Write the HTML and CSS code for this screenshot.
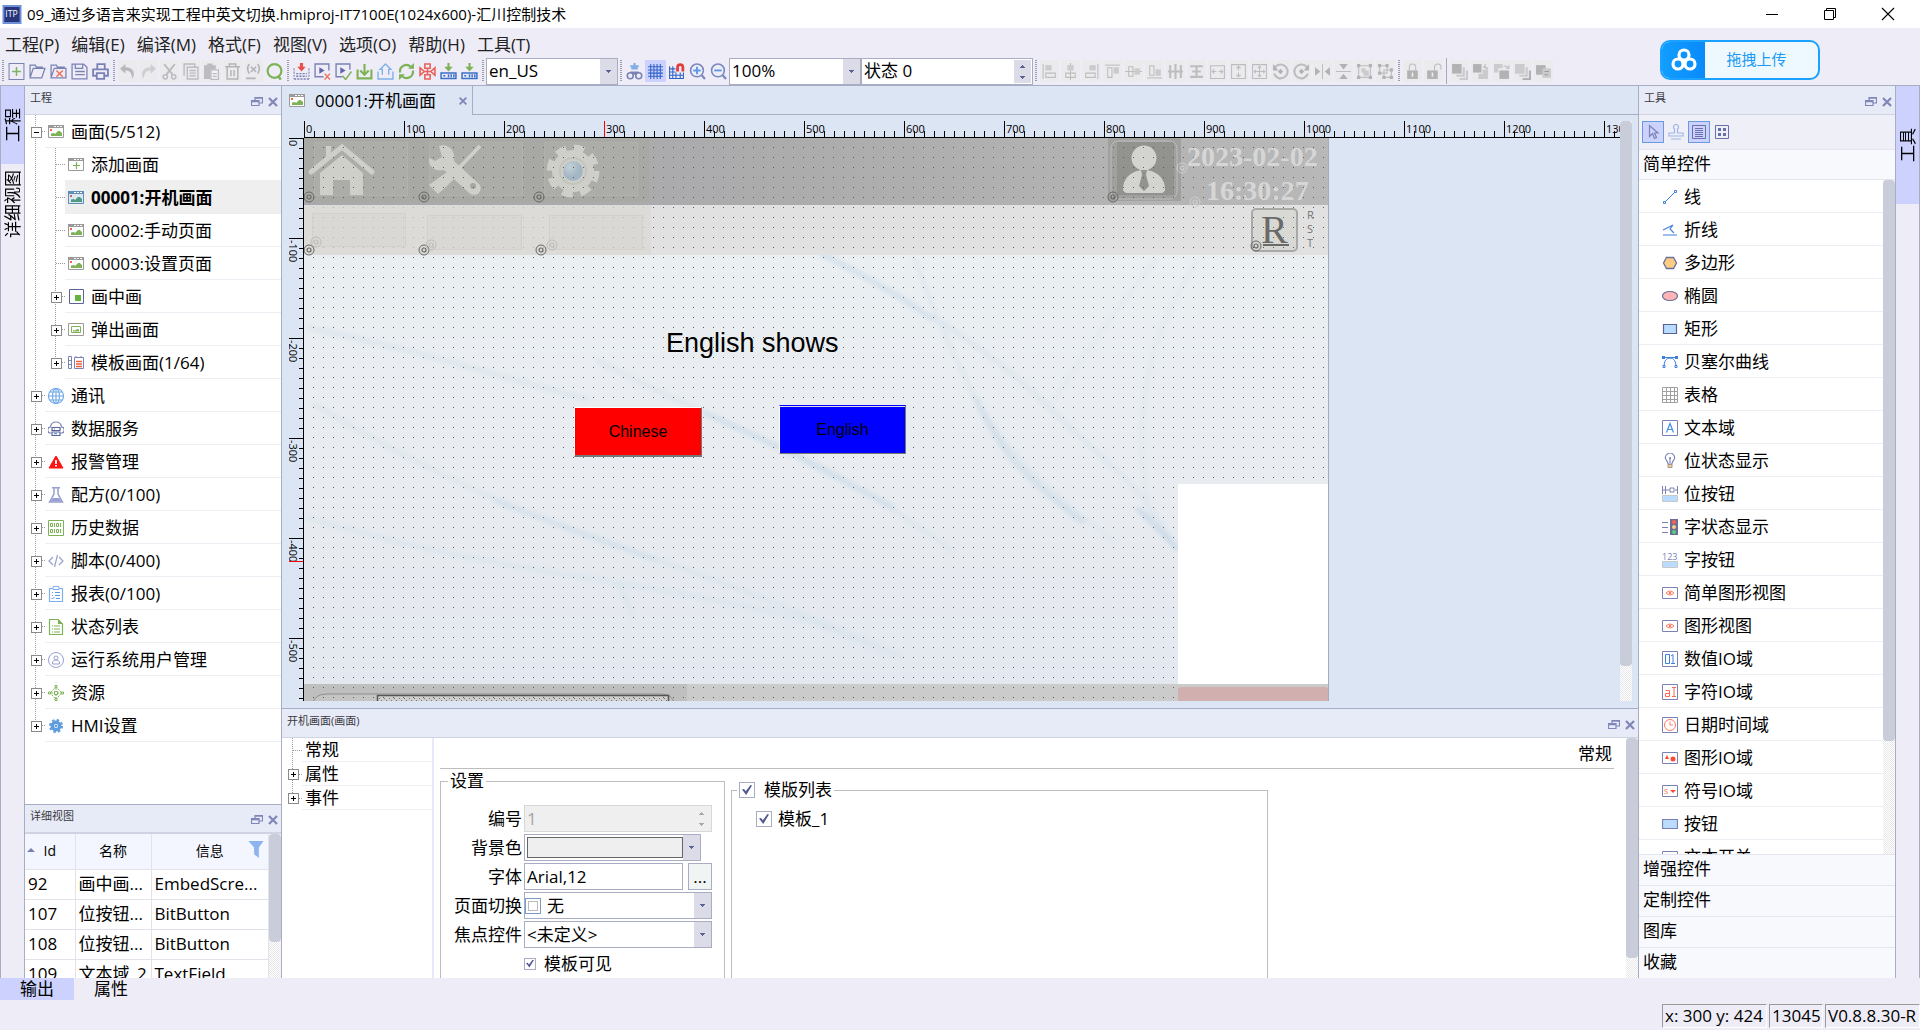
FILE: index.html
```html
<!DOCTYPE html>
<html lang="zh-CN">
<head>
<meta charset="utf-8">
<title>09_通过多语言来实现工程中英文切换.hmiproj-IT7100E(1024x600)-汇川控制技术</title>
<link rel="stylesheet" href="styles.css">
</head>
<body>
<svg class="defs" aria-hidden="true">
  <defs>
    <!-- toolbar: file -->
    <symbol id="i-new" viewBox="0 0 16 16"><path d="M1 .5h14v15H1zM8 4v8M4 8h8" fill="none" stroke="#7a82b4"/><path d="M8 4v8M4 8h8" stroke="#7fb35f" stroke-width="1.4"/></symbol>
    <symbol id="i-open" viewBox="0 0 16 16"><path d="M1 13V2h5l1 2h6M4 5h11l-3 9H1z" fill="none" stroke="#7a82b4" stroke-width="1.2"/></symbol>
    <symbol id="i-closep" viewBox="0 0 16 16"><path d="M1 13V2h5l1 2h7M4 5h11v9H1z" fill="none" stroke="#7a82b4" stroke-width="1.2"/><path d="M6 7l6 6M12 7l-6 6" stroke="#f0705a" stroke-width="1.4"/></symbol>
    <symbol id="i-save" viewBox="0 0 16 16"><path d="M1 1h11l3 3v11H1zM4 1v4h7V1M4 8h9M4 11h9" fill="none" stroke="#7a82b4" stroke-width="1.2"/></symbol>
    <symbol id="i-print" viewBox="0 0 16 16"><path d="M5 6V1h7v5M4 12H1V6h14v6h-3M4.500 9.500h7V15h-7z" fill="none" stroke="#7a82b4" stroke-width="1.7"/></symbol>
    <!-- toolbar: edit -->
    <symbol id="i-undo" viewBox="0 0 16 16"><path d="M6 1L1 5.500 6 10V7c4 0 6 2 6.500 8C16 9 13 4 6 4z" fill="#b8b8bc"/></symbol>
    <symbol id="i-redo" viewBox="0 0 16 16"><path d="M10 1l5 4.500L10 10V7c-4 0-6 2-6.500 8C0 9 3 4 10 4z" fill="#cfcfd2"/></symbol>
    <symbol id="i-cut" viewBox="0 0 16 16"><path d="M3 1l8 10M13 1L5 11" stroke="#bcbcc0" stroke-width="1.8"/><circle cx="4" cy="13" r="2" fill="none" stroke="#bcbcc0" stroke-width="1.400"/><circle cx="12" cy="13" r="2" fill="none" stroke="#bcbcc0" stroke-width="1.400"/></symbol>
    <symbol id="i-copy" viewBox="0 0 16 16"><path d="M5 4h10v11H5zM2 12V1h10v3M7 7h6M7 9.500h6M7 12h6" fill="none" stroke="#bcbcc0" stroke-width="1.300"/></symbol>
    <symbol id="i-paste" viewBox="0 0 16 16"><path d="M1 2h3V.5h5V2h3v4H7v9H1z" fill="#bcbcc0"/><path d="M7.500 6.500h7v9h-7zM9 10h4M9 12.500h4" fill="#f3f3f5" stroke="#bcbcc0" stroke-width="1.200"/></symbol>
    <symbol id="i-trash" viewBox="0 0 16 16"><path d="M1 3.500h14M5 3V1h6v2M3 4v11h10V4M6.500 6.500v6M9.500 6.500v6" fill="none" stroke="#b4b4b8" stroke-width="1.400"/></symbol>
    <symbol id="i-var" viewBox="0 0 16 16"><path d="M4 1Q1 5 4 10M12 1q3 4 0 9M5.500 3.500l5 5M10.500 3.500l-5 5M1 14.500h9" fill="none" stroke="#b4b4b8" stroke-width="1.500"/></symbol>
    <symbol id="i-search" viewBox="0 0 16 16"><circle cx="8" cy="7.500" r="6.500" fill="none" stroke="#7db356" stroke-width="2"/><path d="M11 12l3 3.500" stroke="#7db356" stroke-width="2.400"/></symbol>
    <!-- toolbar: build -->
    <symbol id="i-build" viewBox="0 0 16 16"><path d="M8 0v4" stroke="#e8504a" stroke-width="3"/><path d="M4 3.500h8L8 8z" fill="#e8504a"/><path d="M1 5v10M15 5v10" stroke="#7a82b4" stroke-dasharray="2 1"/><path d="M3 10h10M3 12.500h10M1 15h14" stroke="#7a82b4" stroke-width="1.300" stroke-dasharray="2 1"/></symbol>
    <symbol id="i-simx" viewBox="0 0 16 16"><path d="M9 13H1V1h13v6" fill="none" stroke="#7a82b4" stroke-width="1.300"/><path d="M5 4v6l5-3z" fill="#5d67a8"/><path d="M10 10l5 5.500M15 10l-5 5.500" stroke="#f0705a" stroke-width="1.300"/></symbol>
    <symbol id="i-simok" viewBox="0 0 16 16"><path d="M7 13H1V1h13v5" fill="none" stroke="#7a82b4" stroke-width="1.300"/><path d="M5 4v6l5-3z" fill="#5d67a8"/><path d="M7 12l3 3.500L15.500 8" fill="none" stroke="#7db356" stroke-width="1.400"/></symbol>
    <symbol id="i-down" viewBox="0 0 16 16"><path d="M8 1v9M4 7l4 4 4-4M1.500 6v8.500h13V6" fill="none" stroke="#7db356" stroke-width="2"/></symbol>
    <symbol id="i-up" viewBox="0 0 16 16"><path d="M5 11V6H3l5-5 5 5h-2v5M1 8v7h14V8" fill="none" stroke="#7fb0ea" stroke-width="1.300"/></symbol>
    <symbol id="i-sync" viewBox="0 0 16 16"><path d="M2 9a6 6 0 0 1 10-5.500M14 7a6 6 0 0 1-10 5.500" fill="none" stroke="#7db356" stroke-width="2"/><path d="M9.500 5.500H15V0zM6.500 10.500H1V16z" fill="#7db356"/></symbol>
    <symbol id="i-net" viewBox="0 0 16 16"><path d="M5.500 1h5v4h-5zM5.500 11h5v4h-5zM8 5v6M1 4.500v7l4-3.500zM15 4.500v7L11 8zM5 8h6" fill="none" stroke="#e8645c" stroke-width="1.500"/></symbol>
    <symbol id="i-dev" viewBox="0 0 16 16"><path d="M8 0v4" stroke="#7db356" stroke-width="2"/><path d="M4 3.500h8L8 8z" fill="#7db356"/><path d="M1 9.500h14v5H1zM3 12h2M8 10.500v3M10.500 10.500v3M13 10.500v3" fill="none" stroke="#3b6fc8" stroke-width="1.400"/></symbol>
    <!-- toolbar: view -->
    <symbol id="i-bino" viewBox="0 0 16 16"><path d="M8 0v6M4 3h8M5 5h6" stroke="#82aee6" stroke-width="2"/><path d="M4 8h8v3H4z" fill="#7a82b4"/><circle cx="4" cy="12" r="2.800" fill="#eeedf7" stroke="#7a82b4" stroke-width="1.500"/><circle cx="12" cy="12" r="2.800" fill="#eeedf7" stroke="#7a82b4" stroke-width="1.500"/></symbol>
    <symbol id="i-grid" viewBox="0 0 16 16"><path d="M3.500 1v14M6.500 1v14M9.500 1v14M12.500 1v14M1 3.500h14M1 6.500h14M1 9.500h14M1 12.500h14" stroke="#2f62c8"/></symbol>
    <symbol id="i-magnet" viewBox="0 0 16 16"><path d="M1.500 3v12M4.500 3v12M7.500 9v6M11.500 9v6M14.500 9v6M1 5.500h6M1 8.500h6M1 11.500h14M1 14.500h14" stroke="#2f62c8"/><path d="M9 8V4a2.500 2.500 0 0 1 5 0v4" fill="none" stroke="#e23d3d" stroke-width="2.600"/></symbol>
    <symbol id="i-zin" viewBox="0 0 16 16"><circle cx="7.500" cy="7" r="6" fill="none" stroke="#7a86be" stroke-width="1.500"/><path d="M4 7h7M7.500 3.500v7" stroke="#5b9ae8" stroke-width="1.800"/><path d="M12 11.500l3 3.500" stroke="#7a86be" stroke-width="2"/></symbol>
    <symbol id="i-zout" viewBox="0 0 16 16"><circle cx="7.500" cy="7" r="6" fill="none" stroke="#7a86be" stroke-width="1.500"/><path d="M4 7h7" stroke="#5b9ae8" stroke-width="1.800"/><path d="M12 11.500l3 3.500" stroke="#7a86be" stroke-width="2"/></symbol>
    <!-- toolbar: align -->
    <symbol id="a-l" viewBox="0 0 16 16"><path d="M2 1v14" class="g"/><path d="M4 2h6v5H4z" class="gf"/><path d="M4.500 9.500h9v4h-9z" class="g"/></symbol>
    <symbol id="a-c" viewBox="0 0 16 16"><path d="M8 0v16" class="g"/><path d="M5 2h6v5H5z" class="gf"/><path d="M3.500 9.500h9v4h-9z" class="g"/></symbol>
    <symbol id="a-r" viewBox="0 0 16 16"><path d="M14 1v14" class="g"/><path d="M6 2h6v5H6z" class="gf"/><path d="M2.500 9.500h9v4h-9z" class="g"/></symbol>
    <symbol id="a-t" viewBox="0 0 16 16"><path d="M1 2h14" class="g"/><path d="M9 4h5v6H9z" class="gf"/><path d="M3.500 4.500h4v9h-4z" class="g"/></symbol>
    <symbol id="a-m" viewBox="0 0 16 16"><path d="M0 8h16" class="g"/><path d="M9 5h5v6H9z" class="gf"/><path d="M3.500 3.500h4v9h-4z" class="g"/></symbol>
    <symbol id="a-b" viewBox="0 0 16 16"><path d="M1 14h14" class="g"/><path d="M9 6h5v6H9z" class="gf"/><path d="M3.500 2.500h4v9h-4z" class="g"/></symbol>
    <symbol id="a-h" viewBox="0 0 16 16"><path d="M3 2v12M8 1v14M13 2v12M1 8h14" class="g2"/></symbol>
    <symbol id="a-v" viewBox="0 0 16 16"><path d="M2 3h12M4 8h8M2 13h12M8 3v10" class="g2"/></symbol>
    <symbol id="a-w" viewBox="0 0 16 16"><path d="M1.500 2.500h13v12h-13zM3 8h4M9 8h4M5 6L3 8l2 2M11 6l2 2-2 2" class="g"/></symbol>
    <symbol id="a-hh" viewBox="0 0 16 16"><path d="M1.500 1.500h13v13h-13zM8 3v4M8 9v4M6 5l2-2 2 2M6 11l2 2 2-2" class="g"/></symbol>
    <symbol id="a-wh" viewBox="0 0 16 16"><path d="M1.500 1.500h13v13h-13zM8 3v10M3 8h10M6.500 4.500L8 3l1.500 1.500M6.500 11.500L8 13l1.500-1.500M4.500 6.500L3 8l1.500 1.500M11.500 6.500L13 8l-1.500 1.500" class="g"/></symbol>
    <symbol id="a-rl" viewBox="0 0 16 16"><path d="M3 4a6.500 6.500 0 1 1-1 6" class="g2"/><path d="M1 1v6h5z" class="gd"/><path d="M8 5.500L10.500 8 8 10.500 5.500 8z" class="gd"/></symbol>
    <symbol id="a-rr" viewBox="0 0 16 16"><path d="M13 4a6.500 6.500 0 1 0 1 6" class="g2"/><path d="M15 1v6h-5z" class="gd"/><path d="M8 5.500L10.500 8 8 10.500 5.500 8z" class="gd"/></symbol>
    <symbol id="a-fh" viewBox="0 0 16 16"><path d="M8 1v14" class="g"/><path d="M1 4l5 4-5 4zM15 4l-5 4 5 4z" class="gd"/></symbol>
    <symbol id="a-fv" viewBox="0 0 16 16"><path d="M1 8h14" class="g"/><path d="M4 1l4 5 4-5zM4 15l4-5 4 5z" class="gd"/></symbol>
    <symbol id="a-g" viewBox="0 0 16 16"><path d="M2.500 2.500h11v11h-11z" class="g"/><path d="M5 5h4v4H5zM7 7h5v5H7z" class="gf"/><path d="M1 1h3v3H1zM12 1h3v3h-3zM1 12h3v3H1zM12 12h3v3h-3z" class="gd"/></symbol>
    <symbol id="a-u" viewBox="0 0 16 16"><path d="M2.500 2.500h7v7h-7zM6.500 6.500h7v7h-7z" class="g"/><path d="M1 1h3v3H1zM8 1h3v3H8zM1 8h3v3H1zM12 5h3v3h-3zM12 12h3v3h-3zM5 12h3v3H5z" class="gd"/></symbol>
    <symbol id="a-lock" viewBox="0 0 16 16"><path d="M5 7V4a3 3 0 0 1 6 0v3" class="g"/><path d="M3 7h10v8H3z" class="gd"/><path d="M8 9v4" stroke="#eee" stroke-width="1.500"/></symbol>
    <symbol id="a-unlock" viewBox="0 0 16 16"><path d="M9 7V4a3 3 0 0 1 6 0v2" class="g"/><path d="M2 7h10v8H2z" class="gd"/><path d="M7 9v4" stroke="#eee" stroke-width="1.500"/></symbol>
    <symbol id="a-front" viewBox="0 0 16 16"><path d="M1 1h9v9H1z" class="gd"/><path d="M11 4h2v9H5v-2h6zM14 7h2v9H8v-2h6z" class="gf"/></symbol>
    <symbol id="a-fwd" viewBox="0 0 16 16"><path d="M1 1h8v8H1z" class="gd"/><path d="M6 10h4V6h5v9H6z" class="gf"/><path d="M11 4q3-1 4 2M13 1l-2 3 3 1" class="g"/></symbol>
    <symbol id="a-bwd" viewBox="0 0 16 16"><path d="M1 1h8v4H5v4H1z" class="gf"/><path d="M6 7h9v8H6z" class="gd"/><path d="M10 3q3-1 4 2M12 5h3V2" class="g"/></symbol>
    <symbol id="a-back" viewBox="0 0 16 16"><path d="M1 1h9v9H1zM11 4h2v9H5v-2h6z" class="gf"/><path d="M14 7h2v9H8v-2h6z" class="gd"/></symbol>
    <symbol id="a-z" viewBox="0 0 16 16"><path d="M1 2h9v9H1z" class="gd"/><path d="M7 5h8v9H7z" class="gf"/><path d="M9 8h4M9 11h3" stroke="#999"/></symbol>
    <!-- docks -->
    <symbol id="d-float" viewBox="0 0 12 12"><path d="M4 4V1.500h7.500V7H8M.5 4.500H8v5H.5z" fill="none" stroke="#8186b8" stroke-width="1.200"/><path d="M.5 5.500H8M4 2h7.500" stroke="#8186b8" stroke-width="1.500"/></symbol>
    <symbol id="d-x" viewBox="0 0 12 12"><path d="M2 2l8 8M10 2l-8 8" stroke="#8186b8" stroke-width="2.200"/></symbol>
    <!-- project tree -->
    <symbol id="t-scr" viewBox="0 0 16 16"><path d="M.5 1.500h15v12H.5z" fill="#fff" stroke="#9a9a9a"/><path d="M0 1h16v3H0z" fill="#9a9a9a"/><path d="M6 2.500h8" stroke="#fff" stroke-dasharray="2 1"/><path d="M2 5h2v2H2z" fill="#ff5f45"/><path d="M3 12V9.500l3-.5 1 1 3-3h2l1 1.500h1V12z" fill="#7db356"/></symbol>
    <symbol id="t-scrsel" viewBox="0 0 16 16"><path d="M.5 1.500h15v12H.5z" fill="#dbe8f3" stroke="#5f8fb8"/><path d="M0 1h16v3H0z" fill="#5f8fb8"/><path d="M6 2.500h8" stroke="#fff" stroke-dasharray="2 1"/><path d="M2 5h2v2H2z" fill="#c9626b"/><path d="M3 12V9.500l3-.5 1 1 3-3h2l1 1.500h1V12z" fill="#4f9a80"/></symbol>
    <symbol id="t-add" viewBox="0 0 16 16"><path d="M.5 1.500h15v12H.5z" fill="#fff" stroke="#9a9a9a"/><path d="M0 1h16v3H0z" fill="#9a9a9a"/><path d="M6 2.500h8" stroke="#fff" stroke-dasharray="2 1"/><path d="M8.500 5v7M5 8.500h7" stroke="#7db356" stroke-width="1.200"/></symbol>
    <symbol id="t-pip" viewBox="0 0 16 16"><path d="M1.500.5h14v14h-14z" fill="#fff" stroke="#5b6396"/><path d="M7 6h6v6H7z" fill="#64b443"/></symbol>
    <symbol id="t-pop" viewBox="0 0 16 16"><path d="M.5 1.500h15v12H.5z" fill="#fff" stroke="#9a9a9a"/><path d="M3.500 4.500h9v6h-9z" fill="none" stroke="#7db356"/><path d="M5 9.500V8l2 .5L9 7l2 .5v2z" fill="#7db356"/></symbol>
    <symbol id="t-tpl" viewBox="0 0 16 16"><path d="M.5 1.500h3v12h-3zM.5 5.500h3M.5 9.500h3M6.500 2.500h9v11h-9zM8 1v2M13 1v2" fill="none" stroke="#7a82b4"/><path d="M8 6.500h6M8 9h6M8 11.500h6" stroke="#f0603f" stroke-width="1.400"/></symbol>
    <symbol id="t-globe" viewBox="0 0 16 16"><g fill="none" stroke="#6fa8e8" stroke-width="1.100"><circle cx="8" cy="8" r="7.500"/><ellipse cx="8" cy="8" rx="3.500" ry="7.500"/><path d="M8 .5v15M.5 8h15M2 4h12M2 12h12"/></g></symbol>
    <symbol id="t-data" viewBox="0 0 16 16"><path d="M3 12a3 3 0 0 1-.5-6C3 2 6 1 8 1s5 1 5.500 5a3 3 0 0 1-.5 6" fill="none" stroke="#7a82b4" stroke-width="1.200"/><path d="M4 6.500h8v3H4zM4 11h8v3.500H4z" fill="#fff" stroke="#5b6396" stroke-width="1.200"/><path d="M6 8h1M6 12.700h3" stroke="#3b82e0"/></symbol>
    <symbol id="t-alarm" viewBox="0 0 16 16"><path d="M8 2L15 14H1z" fill="#fb1411" stroke="#fb1411" stroke-linejoin="round"/><path d="M8 6v4M8 11v1.500" stroke="#fff" stroke-width="1.800"/></symbol>
    <symbol id="t-flask" viewBox="0 0 16 16"><path d="M4 .8h8M6 1v6L1.500 15h13L10 7V1" fill="none" stroke="#98a0d0" stroke-width="1.500"/><path d="M5 11h6l3 3.500H2z" fill="#98a0d0"/></symbol>
    <symbol id="t-hist" viewBox="0 0 16 16"><path d="M.5.5h15v15H.5z" fill="none" stroke="#7db356"/><path d="M2.500 3.500h2v3h-2zM6.500 3v4M8.500 3.500h2v3h-2zM12.500 3v4M2.500 9.500h2v3h-2zM6.500 9v4M8.500 9.500h2v3h-2zM12.500 9v4" fill="none" stroke="#7db356"/></symbol>
    <symbol id="t-script" viewBox="0 0 16 16"><path d="M5 4L1 8l4 4M11 4l4 4-4 4M9.500 2l-3 12" fill="none" stroke="#98a0d0" stroke-width="1.200"/></symbol>
    <symbol id="t-report" viewBox="0 0 16 16"><path d="M1.500 2.500h13v13h-13z" fill="none" stroke="#7fb0ea" stroke-width="1.200"/><path d="M5 .5h6v3H5z" fill="#fff" stroke="#7fb0ea"/><path d="M4 6.500h1M7 6.500h5M4 9.500h1M7 9.500h5M3.500 12l1 1 2-2M8 12.500h4" fill="none" stroke="#5b9ae8"/></symbol>
    <symbol id="t-state" viewBox="0 0 16 16"><path d="M1.500.5H10l4.500 4.500v10.500h-13z" fill="none" stroke="#7db356" stroke-width="1.200"/><path d="M10 0v5h5z" fill="#7db356"/><path d="M4 7h1M6 7h6M4 10h1M6 10h6M4 13h1M6 13h6" stroke="#7db356"/></symbol>
    <symbol id="t-user" viewBox="0 0 16 16"><g fill="none" stroke="#98a0d0"><circle cx="8" cy="8" r="7.500"/><circle cx="8" cy="6" r="2"/><path d="M4.500 12V10l2-2h3l2 2v2z"/></g></symbol>
    <symbol id="t-res" viewBox="0 0 16 16"><path d="M8 2l6 6-6 6-6-6zM8 3v10M3 8h10" fill="none" stroke="#7db356" stroke-dasharray="2 1"/><path d="M7 .5h2v2H7zM7 13.500h2v2H7zM.5 7h2v2h-2zM13.500 7h2v2h-2zM6.500 6.500h3v3h-3z" fill="#fff" stroke="#7db356"/></symbol>
    <symbol id="t-gear" viewBox="0 0 16 16"><circle cx="8" cy="8" r="3.700" fill="none" stroke="#5e9cde" stroke-width="3.500"/><circle cx="8" cy="8" r="6" fill="none" stroke="#5e9cde" stroke-width="2" stroke-dasharray="2.500 2.210"/><circle cx="8" cy="8" r="1.300" fill="#5e9cde"/></symbol>
    <!-- toolbox -->
    <symbol id="w-line" viewBox="0 0 16 16"><path d="M2.500 13.500l11-11" stroke="#3f7fe0"/><path d="M1.500 12.500h2v2h-2zM12.500 1.500h2v2h-2z" fill="#fff" stroke="#3f7fe0"/></symbol>
    <symbol id="w-poly" viewBox="0 0 16 16"><path d="M1 8l10-5M11 3L8 7l4 4M1 13h14" fill="none" stroke="#3f7fe0" stroke-width="1.100"/></symbol>
    <symbol id="w-hex" viewBox="0 0 16 16"><path d="M1.500 8L4.500 2.500h7l3 5.500-3 5.500h-7z" fill="#fdcd84" stroke="#6b6f98" stroke-width="1.300"/></symbol>
    <symbol id="w-ell" viewBox="0 0 16 16"><ellipse cx="8" cy="8" rx="7.500" ry="4.500" fill="#ffb5b5" stroke="#6b6f98" stroke-width="1.200"/></symbol>
    <symbol id="w-rect" viewBox="0 0 16 16"><path d="M1.500 3.500h13v9h-13z" fill="#b9dcff" stroke="#5b6396" stroke-width="1.200"/></symbol>
    <symbol id="w-bez" viewBox="0 0 16 16"><path d="M2 13Q2 4 8 4t6 9M1 3.500h14" fill="none" stroke="#3f7fe0"/><path d="M0 2h3v3H0zM13 2h3v3h-3z" fill="#3f7fe0"/><path d="M1 11.500h2v2H1zM13 11.500h2v2h-2z" fill="#fff" stroke="#3f7fe0"/></symbol>
    <symbol id="w-tab" viewBox="0 0 16 16"><path d="M.5.5h15v15H.5zM4.500.5v15M8.500.5v15M12.500.5v15M.5 4.500h15M.5 8.500h15M.5 12.500h15" fill="none" stroke="#a0a0a0"/></symbol>
    <symbol id="w-box" viewBox="0 0 16 16"><path d="M.5.5h15v15H.5z" fill="#fff" stroke="#7a82b4"/></symbol>
    <symbol id="w-bulb" viewBox="0 0 16 16"><path d="M6 11q0-2-1.500-3.500A4.500 4.500 0 1 1 11.500 7.500Q10 9 10 11zM8 5v5" fill="none" stroke="#7a82b4" stroke-width="1.100"/><circle cx="8" cy="5" r="1" fill="#7a82b4"/><path d="M6 11.500h4v3H6z" fill="#fdcd84" stroke="#8a8a8a" stroke-width=".8"/></symbol>
    <symbol id="w-bit" viewBox="0 0 16 16"><path d="M.5 0v8M3.500 0v8M.5 4h3M3.500 4h4M13 4h2.500M8 2v4M12 2v4M8 2h4M8 6h4M15.500 0v8" fill="none" stroke="#7a82b4"/><path d="M.5 9.500h15v6H.5z" fill="#b9dcff" stroke="#c8c8c8"/></symbol>
    <symbol id="w-word" viewBox="0 0 16 16"><path d="M8 0h8v16H8z" fill="#6b6f98"/><circle cx="12" cy="3" r="2" fill="#ff5f45"/><circle cx="12" cy="8" r="2" fill="#fdcd84"/><circle cx="12" cy="13" r="2" fill="#56cf7e"/><path d="M0 3.500h6M0 8.500h6M0 13.500h6" stroke="#7a82b4"/></symbol>
    <symbol id="w-123" viewBox="0 0 16 16"><text x="0" y="8" font-size="9" fill="#7a82b4" font-family="Open Sans">123</text><path d="M.5 9.500h15v6H.5z" fill="#b9dcff" stroke="#c8c8c8"/></symbol>
    <symbol id="w-eye" viewBox="0 0 16 16"><path d="M.5 2.500h15v11H.5z" fill="#fff" stroke="#7a82b4"/><path d="M4 8q4-4 8 0q-4 4-8 0z" fill="none" stroke="#ff7a62"/><circle cx="8" cy="8" r="1.300" fill="#ff7a62"/></symbol>
    <symbol id="w-clock" viewBox="0 0 16 16"><path d="M.5.5h15v15H.5z" fill="#fff" stroke="#7a82b4"/><circle cx="8" cy="8" r="5.500" fill="none" stroke="#ff7a62"/><path d="M8 4.500V8h3" fill="none" stroke="#ff7a62"/></symbol>
    <symbol id="w-gio" viewBox="0 0 16 16"><path d="M.5 2.500h15v11H.5z" fill="#fff" stroke="#7a82b4"/><path d="M3 9l2-4 2 4z" fill="#fb4c30"/><circle cx="11" cy="9" r="2.500" fill="#fb4c30"/></symbol>
    <symbol id="w-sio" viewBox="0 0 16 16"><path d="M.5 2.500h15v11H.5z" fill="#fff" stroke="#7a82b4"/><text x="2" y="11" font-size="9" fill="#fb6c50" font-family="Open Sans">s</text><path d="M8 7h6l-3 3z" fill="#fb4c30"/></symbol>
    <symbol id="w-btn" viewBox="0 0 16 16"><path d="M.5 3.500h15v9H.5z" fill="#b9dcff" stroke="#7a82b4" stroke-width="1.200"/></symbol>
    <!-- object anchor on the screen canvas -->
    <symbol id="anchor" viewBox="0 0 12 12"><circle cx="6" cy="6" r="5" fill="none" stroke="currentColor"/><circle cx="6" cy="6" r="2" fill="none" stroke="currentColor" stroke-width="1.200"/></symbol>
  </defs>
</svg>

<header class="titlebar">
  <svg class="logo" viewBox="0 0 20 20"><path d="M1 1h18v18H1z" fill="#27357c" stroke="#6f8fd6" stroke-width="2"/><text x="3" y="13" font-size="9" fill="#fff" font-family="Open Sans">ITP</text></svg>
  <h1>09_通过多语言来实现工程中英文切换.hmiproj-IT7100E(1024x600)-汇川控制技术</h1>
  <div class="winbtns">
    <button aria-label="最小化"><svg viewBox="0 0 14 14"><path d="M1 7.500h12" stroke="#000"/></svg></button>
    <button aria-label="还原"><svg viewBox="0 0 14 14"><path d="M3.500 3.500v-2h9v9h-2M1.500 3.500h9v9h-9z" fill="none" stroke="#000"/></svg></button>
    <button aria-label="关闭"><svg viewBox="0 0 14 14"><path d="M1 1l12 12M13 1L1 13" stroke="#000" stroke-width="1.100"/></svg></button>
  </div>
</header>

<nav class="menubar">
  <button>工程(P)</button><button>编辑(E)</button><button>编译(M)</button><button>格式(F)</button><button>视图(V)</button><button>选项(O)</button><button>帮助(H)</button><button>工具(T)</button>
</nav>

<div class="toolbar">
  <i class="grip"></i>
  <button class="tb"><svg><use href="#i-new"/></svg></button><button class="tb"><svg><use href="#i-open"/></svg></button><button class="tb"><svg><use href="#i-closep"/></svg></button><button class="tb"><svg><use href="#i-save"/></svg></button><button class="tb"><svg><use href="#i-print"/></svg></button>
  <i class="grip"></i>
  <button class="tb off"><svg><use href="#i-undo"/></svg></button><button class="tb off"><svg><use href="#i-redo"/></svg></button><button class="tb off"><svg><use href="#i-cut"/></svg></button><button class="tb off"><svg><use href="#i-copy"/></svg></button><button class="tb off"><svg><use href="#i-paste"/></svg></button><button class="tb off"><svg><use href="#i-trash"/></svg></button><button class="tb off"><svg><use href="#i-var"/></svg></button><button class="tb"><svg><use href="#i-search"/></svg></button>
  <i class="grip"></i>
  <button class="tb"><svg><use href="#i-build"/></svg></button><button class="tb"><svg><use href="#i-simx"/></svg></button><button class="tb"><svg><use href="#i-simok"/></svg></button><button class="tb"><svg><use href="#i-down"/></svg></button><button class="tb"><svg><use href="#i-up"/></svg></button><button class="tb"><svg><use href="#i-sync"/></svg></button><button class="tb"><svg><use href="#i-net"/></svg></button><button class="tb"><svg><use href="#i-dev"/></svg></button><button class="tb"><svg><use href="#i-dev"/></svg></button>
  <i class="grip"></i>
  <span class="combo tbcombo"><select aria-label="语言"><option>en_US</option></select></span>
  <i class="grip"></i>
  <button class="tb"><svg><use href="#i-bino"/></svg></button><button class="tb on"><svg><use href="#i-grid"/></svg></button><button class="tb"><svg><use href="#i-magnet"/></svg></button><button class="tb"><svg><use href="#i-zin"/></svg></button><button class="tb"><svg><use href="#i-zout"/></svg></button>
  <span class="combo tbcombo"><select aria-label="缩放"><option>100%</option></select></span>
  <span class="spin tbspin"><input type="text" value="状态 0" aria-label="状态"><span class="arrows"></span></span>
  <i class="grip"></i>
  <button class="tb off"><svg><use href="#a-l"/></svg></button><button class="tb off"><svg><use href="#a-c"/></svg></button><button class="tb off"><svg><use href="#a-r"/></svg></button><button class="tb off"><svg><use href="#a-t"/></svg></button><button class="tb off"><svg><use href="#a-m"/></svg></button><button class="tb off"><svg><use href="#a-b"/></svg></button><button class="tb off"><svg><use href="#a-h"/></svg></button><button class="tb off"><svg><use href="#a-v"/></svg></button><button class="tb off"><svg><use href="#a-w"/></svg></button><button class="tb off"><svg><use href="#a-hh"/></svg></button><button class="tb off"><svg><use href="#a-wh"/></svg></button><button class="tb off"><svg><use href="#a-rl"/></svg></button><button class="tb off"><svg><use href="#a-rr"/></svg></button><button class="tb off"><svg><use href="#a-fh"/></svg></button><button class="tb off"><svg><use href="#a-fv"/></svg></button><button class="tb off"><svg><use href="#a-g"/></svg></button><button class="tb off"><svg><use href="#a-u"/></svg></button>
  <i class="grip"></i>
  <button class="tb off"><svg><use href="#a-lock"/></svg></button><button class="tb off"><svg><use href="#a-unlock"/></svg></button>
  <i class="sep"></i>
  <button class="tb off"><svg><use href="#a-front"/></svg></button><button class="tb off"><svg><use href="#a-fwd"/></svg></button><button class="tb off"><svg><use href="#a-bwd"/></svg></button><button class="tb off"><svg><use href="#a-back"/></svg></button><button class="tb off"><svg><use href="#a-z"/></svg></button>
</div>

<button class="upload">
  <span class="cloud"><svg viewBox="0 0 26 24"><g fill="none" stroke="#fff" stroke-width="3.200"><circle cx="13" cy="7" r="5"/><circle cx="7" cy="16" r="5"/><circle cx="19" cy="16" r="5"/></g></svg></span>
  <span class="uptext">拖拽上传</span>
</button>

<main class="shell">
  <nav class="strip">
    <button class="vtab on left1">工程</button>
    <button class="vtab left2">详细视图</button>
  </nav>

  <div class="column">
    <section class="dock grow">
      <header class="dockhead"><h2>工程</h2><button aria-label="浮动"><svg><use href="#d-float"/></svg></button><button aria-label="关闭"><svg><use href="#d-x"/></svg></button></header>
      <ul class="tree">
        <li><div class="node"><span class="exp open"></span><a href="#"><svg><use href="#t-scr"/></svg>画面(5/512)</a></div>
          <ul>
            <li><div class="node"><span class="exp leaf"></span><a href="#"><svg><use href="#t-add"/></svg>添加画面</a></div></li>
            <li><div class="node sel"><span class="exp leaf"></span><a href="#"><svg><use href="#t-scrsel"/></svg>00001:开机画面</a></div></li>
            <li><div class="node"><span class="exp leaf"></span><a href="#"><svg><use href="#t-scr"/></svg>00002:手动页面</a></div></li>
            <li><div class="node"><span class="exp leaf"></span><a href="#"><svg><use href="#t-scr"/></svg>00003:设置页面</a></div></li>
            <li><div class="node"><span class="exp"></span><a href="#"><svg><use href="#t-pip"/></svg>画中画</a></div></li>
            <li><div class="node"><span class="exp"></span><a href="#"><svg><use href="#t-pop"/></svg>弹出画面</a></div></li>
            <li><div class="node"><span class="exp"></span><a href="#"><svg><use href="#t-tpl"/></svg>模板画面(1/64)</a></div></li>
          </ul>
        </li>
        <li><div class="node"><span class="exp"></span><a href="#"><svg><use href="#t-globe"/></svg>通讯</a></div></li>
        <li><div class="node"><span class="exp"></span><a href="#"><svg><use href="#t-data"/></svg>数据服务</a></div></li>
        <li><div class="node"><span class="exp"></span><a href="#"><svg><use href="#t-alarm"/></svg>报警管理</a></div></li>
        <li><div class="node"><span class="exp"></span><a href="#"><svg><use href="#t-flask"/></svg>配方(0/100)</a></div></li>
        <li><div class="node"><span class="exp"></span><a href="#"><svg><use href="#t-hist"/></svg>历史数据</a></div></li>
        <li><div class="node"><span class="exp"></span><a href="#"><svg><use href="#t-script"/></svg>脚本(0/400)</a></div></li>
        <li><div class="node"><span class="exp"></span><a href="#"><svg><use href="#t-report"/></svg>报表(0/100)</a></div></li>
        <li><div class="node"><span class="exp"></span><a href="#"><svg><use href="#t-state"/></svg>状态列表</a></div></li>
        <li><div class="node"><span class="exp"></span><a href="#"><svg><use href="#t-user"/></svg>运行系统用户管理</a></div></li>
        <li><div class="node"><span class="exp"></span><a href="#"><svg><use href="#t-res"/></svg>资源</a></div></li>
        <li><div class="node"><span class="exp"></span><a href="#"><svg><use href="#t-gear"/></svg>HMI设置</a></div></li>
      </ul>
    </section>
    <section class="dock detail">
      <header class="dockhead"><h2>详细视图</h2><button aria-label="浮动"><svg><use href="#d-float"/></svg></button><button aria-label="关闭"><svg><use href="#d-x"/></svg></button></header>
      <div class="scrollrow">
        <div class="clip">
          <table class="grid">
            <colgroup><col class="c1"><col class="c2"><col class="c3"></colgroup>
            <thead><tr><th><span class="sort"></span>Id</th><th>名称</th><th class="info">信息<svg class="funnel" viewBox="0 0 16 18"><path d="M0 0h16l-5 7v11l-5-4V7z" fill="#8cb4ee"/></svg></th></tr></thead>
            <tbody>
              <tr><td>92</td><td>画中画...</td><td>EmbedScre...</td></tr>
              <tr><td>107</td><td>位按钮...</td><td>BitButton</td></tr>
              <tr><td>108</td><td>位按钮...</td><td>BitButton</td></tr>
              <tr><td>109</td><td>文本域_2</td><td>TextField</td></tr>
            </tbody>
          </table>
        </div>
        <div class="scroll"><span class="thumb t-detail"></span></div>
      </div>
    </section>
  </div>

  <div class="column center">
    <div class="tabs"><div class="tab"><svg><use href="#t-scr"/></svg><span>00001:开机画面</span><button aria-label="关闭"><svg><use href="#d-x"/></svg></button></div><div class="tabfill"></div></div>
    <section class="editor">
      <div class="stage">
        <div class="rulerh"><b>0</b><b>100</b><b>200</b><b class="mark">300</b><b>400</b><b>500</b><b>600</b><b>700</b><b>800</b><b>900</b><b>1000</b><b>1100</b><b>1200</b><b>1300</b></div>
        <div class="rulerv"><b>0</b><b>-100</b><b>-200</b><b>-300</b><b>-400</b><b>-500</b><i class="vmark"></i></div>
        <div class="view">
          <div class="screen">
            <svg class="art" viewBox="0 0 1024 600">
              <defs>
                <linearGradient id="bg" x1="0" y1="0" x2="0" y2="1"><stop offset="0" stop-color="#ebf0f3"/><stop offset=".6" stop-color="#e8ecf0"/><stop offset="1" stop-color="#e2e6ef"/></linearGradient>
                <linearGradient id="hd" x1="0" y1="0" x2="1" y2="0"><stop offset="0" stop-color="#a9a9ad"/><stop offset=".5" stop-color="#acacad"/><stop offset="1" stop-color="#b8b8b8"/></linearGradient>
                <radialGradient id="ball" cx=".35" cy=".3"><stop offset="0" stop-color="#c4d0d6"/><stop offset="1" stop-color="#a3b6c4"/></radialGradient>
                <filter id="soft"><feGaussianBlur stdDeviation="2.500"/></filter>
                <pattern id="dots" x="9" y="9" width="10" height="10" patternUnits="userSpaceOnUse"><path d="M0 0h1v1H0z" fill="#555a5e"/></pattern>
                <pattern id="dotsfaint" x="9" y="9" width="10" height="10" patternUnits="userSpaceOnUse"><path d="M0 0h1v1H0z" fill="#b4b4b1"/></pattern>
                <pattern id="hatch" width="5" height="5" patternUnits="userSpaceOnUse"><path d="M0 0h1v1H0zM2 2h1v1H2z" fill="#777"/></pattern>
              </defs>
              <path d="M0 0h1024v600H0z" fill="url(#bg)"/>
              <g fill="none" stroke="#dae4ec" stroke-width="4" filter="url(#soft)">
                <path d="M516 115Q585 150 630 182" stroke="#cddbe7"/>
                <path d="M610 119Q635 190 671 259T813 405" stroke-width="3"/>
                <path d="M671 259Q690 300 712 325T780 385" stroke="#cbdae7"/>
                <path d="M630 179Q700 225 745 269T813 332T874 412"/>
                <path d="M833 370Q850 385 874 412" stroke="#c4d5e5"/>
                <path d="M2 189Q90 208 150 225T286 262"/>
                <path d="M292 222Q390 272 468 305T651 415"/>
                <path d="M400 275Q440 292 480 312T590 370" stroke="#cbdae7"/>
                <path d="M8 265Q90 315 171 352T353 422T597 519"/>
                <path d="M190 362Q270 393 353 422" stroke="#d0dde8"/>
                <path d="M2 379Q60 397 130 412T313 445T502 482L597 519"/>
                <path d="M313 445Q322 458 330 480"/>
                <path d="M854 119Q790 200 745 269" stroke="#e1e7ec" stroke-width="3"/>
                <path d="M894 122Q815 240 847 379" stroke="#dfe6ec" stroke-width="3"/>
              </g>
              <path d="M0 0h1024v67H0z" fill="url(#hd)"/>
              <path d="M0 0h345v64H0z" fill="#a8a9a4"/>
              <path d="M0 67h1024v50H0z" fill="#e1e1e1"/>
              <path d="M0 67h347v50H0z" fill="#dcdbd7"/>
              <g fill="#acada8" stroke="#b2b2ad"><path d="M10.500 4.500h93v53h-93zM125.500 4.500h93v53h-93zM240.500 4.500h93v53h-93z"/></g>
              <g fill="#d9d8d4" stroke="#d1d0cc"><path d="M8.500 75.500h93v33h-93zM123.500 77.500h94v34h-94zM245.500 77.500h93v34h-93z"/></g>
              <g fill="#cfcfca">
                <path d="M22 8h5v8l-5 4z"/><path d="M7 34L38 9l30 25" fill="none" stroke="#cfcfca" stroke-width="5" stroke-linecap="round"/><path d="M38 17l21 18v22H46V42H29v15H16V35z"/>
                <path d="M135 8c9-3 17 5 15 15l26 24c3 9-6 13-12 7l-24-22c-9 2-16-3-15-12l6 3 7-4z"/><circle cx="169" cy="48" r="3" fill="#a6a6a2"/>
                <path d="M152 33l24-25" stroke="#cfcfca" stroke-width="3.500"/><path d="M143 34l7 7-8 8-8 7-9-9z"/>
                <circle cx="269" cy="33" r="21"/><circle cx="269" cy="33" r="22" fill="none" stroke="#cfcfca" stroke-width="9" stroke-dasharray="10 7.280"/>
              </g>
              <circle cx="269" cy="33" r="13" fill="none" stroke="#c4c4bf" stroke-width="2"/><circle cx="269" cy="33" r="10" fill="url(#ball)"/>
              <path d="M804 0h73v63h-73z" fill="#a0a09e"/><path d="M813 4h57v53h-57z" fill="#92928f"/><rect x="807" y="3" width="66" height="58" rx="7" fill="none" stroke="#bdbdbb"/>
              <path d="M840 32c-13 0-21 9-21 19 0 2 2 4 4 4h34c3 0 4-2 4-4 0-10-8-19-21-19z" fill="#d3d3d0"/><circle cx="840" cy="20" r="12.500" fill="#d3d3d0"/><path d="M837 32h6l-1 5 3 11-5 5-5-5 3-11z" fill="#92928f"/>
              <rect x="948" y="71" width="45" height="42" rx="4" fill="#d8d8d5" stroke="#a9a9a7" stroke-width="2"/><path d="M959 107h26" stroke="#6a6a69" stroke-width="2"/>
              <path d="M0 546h1024v54H0z" fill="#cbcbcb"/><path d="M0 546h383v54H0z" fill="#bfbfbf"/><path d="M9 600v-34q1-10 14-10h334q12 0 13 10v34" fill="#c4c4c4" stroke="#8f8f8f"/><path d="M73.500 557.500h291V600h-291z" fill="#cfcfcf"/><path d="M73.500 557.500h291V600h-291z" fill="url(#hatch)" stroke="#555" stroke-width="1.500"/>
              <path d="M0 0h1024v67H0zM347 67h677v50H347zM0 117h1024v483H0z" fill="url(#dots)"/><path d="M0 67h347v50H0z" fill="url(#dotsfaint)"/>
              <path d="M874 346h150v200H874z" fill="#fff"/><path d="M874 600v-48q0-3 3-3h144q3 0 3 3v48z" fill="#d1afaf"/>
              <g color="#666"><use href="#anchor" x="-1" y="53" width="12" height="12"/><use href="#anchor" x="114" y="53" width="12" height="12"/><use href="#anchor" x="229" y="53" width="12" height="12"/><use href="#anchor" x="-1" y="106" width="12" height="12"/><use href="#anchor" x="114" y="106" width="12" height="12"/><use href="#anchor" x="231" y="106" width="12" height="12"/><use href="#anchor" x="803" y="53" width="12" height="12"/><use href="#anchor" x="946" y="102" width="12" height="12"/></g>
              <g color="#bcbcba"><use href="#anchor" x="6" y="98" width="12" height="12"/><use href="#anchor" x="121" y="101" width="12" height="12"/><use href="#anchor" x="242" y="101" width="12" height="12"/></g>
              <g color="#d0d0d0"><use href="#anchor" x="872" y="24" width="12" height="12"/><use href="#anchor" x="885" y="58" width="12" height="12"/></g>
            </svg>
            <span class="obj date">2023-02-02</span>
            <span class="obj time">16:30:27</span>
            <span class="obj reset">R</span>
            <span class="obj rst">R<br>S<br>T</span>
            <span class="obj caption">English shows</span>
            <button class="obj hmi red">Chinese</button>
            <button class="obj hmi blue">English</button>
          </div>
        </div>
      </div>
      <div class="scroll"><span class="thumb t-stage"></span></div>
    </section>
    <section class="dock props">
      <header class="dockhead"><h2>开机画面(画面)</h2><button aria-label="浮动"><svg><use href="#d-float"/></svg></button><button aria-label="关闭"><svg><use href="#d-x"/></svg></button></header>
      <div class="scrollrow">
        <ul class="tree small">
          <li><div class="node"><span class="exp leaf"></span><a href="#">常规</a></div></li>
          <li><div class="node"><span class="exp"></span><a href="#">属性</a></div></li>
          <li><div class="node"><span class="exp"></span><a href="#">事件</a></div></li>
        </ul>
        <div class="clip propbody">
          <h3>常规</h3>
          <div class="groups">
            <fieldset class="settings">
              <legend>设置</legend>
              <label for="f1">编号</label><span class="spin dis"><input id="f1" value="1" disabled><span class="arrows"></span></span>
              <label for="f2">背景色</label><span class="combo color"><select id="f2"><option></option></select></span>
              <label for="f3">字体</label><span class="fontrow"><input id="f3" class="txt" value="Arial,12"><button>...</button></span>
              <label for="f4">页面切换</label><span class="combo icon"><i class="none"></i><select id="f4"><option>无</option></select></span>
              <label for="f5">焦点控件</label><span class="combo"><select id="f5"><option>&lt;未定义&gt;</option></select></span>
              <span></span><label class="check"><input type="checkbox" class="cb sm" checked>模板可见</label>
            </fieldset>
            <fieldset class="templates">
              <legend><label><input type="checkbox" class="cb" checked>模版列表</label></legend>
              <label class="item"><input type="checkbox" class="cb" checked>模板_1</label>
            </fieldset>
          </div>
        </div>
        <div class="scroll"><span class="thumb t-props"></span></div>
      </div>
    </section>
  </div>

  <section class="dock toolbox">
    <header class="dockhead"><h2>工具</h2><button aria-label="浮动"><svg><use href="#d-float"/></svg></button><button aria-label="关闭"><svg><use href="#d-x"/></svg></button></header>
    <div class="modes">
      <button class="on" aria-label="选择"><svg viewBox="0 0 16 16"><path d="M4.500 1.500v11l3-3 2 5 2-1-2-4.500h3.500z" fill="none" stroke="#7a82b4" stroke-width="1.200"/></svg></button>
      <button aria-label="图章"><svg viewBox="0 0 16 16"><path d="M8 .5a2.500 2.500 0 0 1 1.500 4.500V9H15v3H1V9h5.500V5A2.500 2.500 0 0 1 8 .5zM3 15h10" fill="none" stroke="#9fb6e6" stroke-width="1.200"/></svg></button>
      <button class="on" aria-label="列表"><svg viewBox="0 0 16 16"><path d="M1.500 1.500h13v13h-13zM4 4.500h8M4 6.500h8M4 8.500h8M4 10.500h8M4 12.500h8" fill="none" stroke="#6870ac"/></svg></button>
      <button aria-label="网格"><svg viewBox="0 0 16 16"><path d="M1.500 1.500h13v13h-13z" fill="none" stroke="#6870ac"/><path d="M4 4h3v3H4zM9 4h3v3H9zM4 9h3v3H4zM9 9h3v3H9z" fill="#6870ac"/></svg></button>
    </div>
    <button class="acc">简单控件</button>
    <div class="scrollrow">
      <ul class="clip widgets">
        <li><svg><use href="#w-line"/></svg>线</li>
        <li><svg><use href="#w-poly"/></svg>折线</li>
        <li><svg><use href="#w-hex"/></svg>多边形</li>
        <li><svg><use href="#w-ell"/></svg>椭圆</li>
        <li><svg><use href="#w-rect"/></svg>矩形</li>
        <li><svg><use href="#w-bez"/></svg>贝塞尔曲线</li>
        <li><svg><use href="#w-tab"/></svg>表格</li>
        <li><svg viewBox="0 0 16 16"><use href="#w-box"/><path d="M4.500 12.500L8 3.500l3.500 9M5.500 9.500h5" fill="none" stroke="#3f8fe8" stroke-width="1.200"/></svg>文本域</li>
        <li><svg><use href="#w-bulb"/></svg>位状态显示</li>
        <li><svg><use href="#w-bit"/></svg>位按钮</li>
        <li><svg><use href="#w-word"/></svg>字状态显示</li>
        <li><svg><use href="#w-123"/></svg>字按钮</li>
        <li><svg><use href="#w-eye"/></svg>简单图形视图</li>
        <li><svg><use href="#w-eye"/></svg>图形视图</li>
        <li><svg viewBox="0 0 16 16"><use href="#w-box"/><path d="M3.500 3.500h4v9h-4zM9 5l2-1.500v9M9 12.500h4" fill="none" stroke="#3f7fe0"/></svg>数值IO域</li>
        <li><svg viewBox="0 0 16 16"><use href="#w-box"/><path d="M3.500 6.500h4v6h-4v-3h4M10 3.500h4M12 3.500v9M10 12.500h4" fill="none" stroke="#fb6c50"/></svg>字符IO域</li>
        <li><svg><use href="#w-clock"/></svg>日期时间域</li>
        <li><svg><use href="#w-gio"/></svg>图形IO域</li>
        <li><svg><use href="#w-sio"/></svg>符号IO域</li>
        <li><svg><use href="#w-btn"/></svg>按钮</li>
        <li><svg><use href="#w-eye"/></svg>文本开关</li>
      </ul>
      <div class="scroll"><span class="thumb t-tools"></span></div>
    </div>
    <button class="acc">增强控件</button>
    <button class="acc">定制控件</button>
    <button class="acc">图库</button>
    <button class="acc">收藏</button>
  </section>

  <nav class="strip right"><button class="vtab on r1">工具</button></nav>
</main>

<footer class="foot">
  <nav class="btabs"><button class="on">输出</button><button>属性</button></nav>
  <div class="status"><span class="s1">x: 300 y: 424</span><span class="s2">13045</span><span class="s3">V0.8.8.30-R</span></div>
</footer>
</body>
</html>
```

FILE: styles.css
```css
* { box-sizing: border-box; }
body {
  margin: 0;
  height: 100vh;
  display: flex;
  flex-direction: column;
  overflow: hidden;
  background: #eeedf7;
  color: #000;
  font: 17px/24px "Open Sans", "Noto Sans CJK SC", sans-serif;
}
button, input, select { font: inherit; color: inherit; border: 0; background: none; padding: 0; margin: 0; }
h1, h2, h3, ul, fieldset { margin: 0; padding: 0; font-weight: normal; }
ul { list-style: none; }
a { color: inherit; text-decoration: none; }
svg { width: 16px; height: 16px; flex: none; display: block; }
.defs { position: absolute; width: 0; height: 0; }

.g { fill: none; stroke: #bdbdbf; }
.g2 { fill: none; stroke: #bdbdbf; stroke-width: 2; }
.gf { fill: #cbcbcd; }
.gd { fill: #b2b2b4; }

/* title bar, menu, toolbar */
.titlebar { flex: none; height: 28px; display: flex; align-items: center; background: #fff; padding-left: 2px; }
.titlebar .logo { width: 20px; height: 19px; }
.titlebar h1 { font-size: 15px; line-height: 24px; margin-left: 5px; flex: 1; white-space: nowrap; overflow: hidden; }
.winbtns { display: flex; padding-right: 3px; }
.winbtns button { width: 58px; height: 28px; display: flex; align-items: center; justify-content: center; }
.winbtns svg { width: 14px; height: 14px; }
.menubar { flex: none; height: 29px; padding: 5px 0 0 5px; display: flex; gap: 12px; color: #222; }
.menubar button { white-space: nowrap; }
.toolbar { flex: none; height: 29px; display: flex; align-items: center; border-bottom: 1px solid #a9adc4; }
.grip { flex: none; width: 6px; height: 22px; background: repeating-linear-gradient(#9a9cae 0 1px, transparent 1px 2px) 2px 0 / 2px 100% no-repeat; }
.sep { flex: none; width: 1px; height: 26px; margin: 0 2px; background: #aaa; }
.tb { flex: none; width: 21px; height: 22px; display: flex; align-items: center; justify-content: center; }
.tb svg { width: 17px; height: 17px; }
.tb.off { background: linear-gradient(#ebebee, #ebebee) 1px 0 / 19px 100% no-repeat; }
.tb.on { background: #ccd2fd; }
.upload {
  position: absolute; top: 40px; right: 100px; width: 160px; height: 40px; display: flex; overflow: hidden;
  border: 2px solid #1ba2ff; border-radius: 10px; background: #eef8ff; color: #1b9bf5; font-size: 15px;
}
.cloud { width: 43px; height: 36px; background: linear-gradient(90deg, #119eff, #0a8afb); display: flex; align-items: center; justify-content: center; }
.cloud svg { width: 26px; height: 24px; }
.uptext { flex: 1; padding-right: 10px; line-height: 34px; }

/* form controls */
.combo, .spin { position: relative; display: flex; height: 27px; border: 1px solid #a9adc4; background: #fff; }
.combo select { appearance: none; flex: 1; width: 100%; padding: 0 20px 0 2px; outline: 0; }
.combo::after {
  content: ""; position: absolute; right: 0; top: 0; bottom: 0; width: 17px; pointer-events: none;
  background: linear-gradient(#5b6396, #5b6396) 6px 11px / 5px 1px no-repeat, linear-gradient(#5b6396, #5b6396) 7px 12px / 3px 1px no-repeat, linear-gradient(#5b6396, #5b6396) 8px 13px / 1px 1px no-repeat, #dcdce8;
}
.spin input { flex: 1; min-width: 0; padding: 0 2px; }
.arrows {
  flex: none; width: 17px; margin: 1px;
  background: linear-gradient(#5b6396, #5b6396) 8px 5px / 1px 1px no-repeat, linear-gradient(#5b6396, #5b6396) 7px 6px / 3px 1px no-repeat, linear-gradient(#5b6396, #5b6396) 6px 7px / 5px 1px no-repeat,
    linear-gradient(#5b6396, #5b6396) 6px 16px / 5px 1px no-repeat, linear-gradient(#5b6396, #5b6396) 7px 17px / 3px 1px no-repeat, linear-gradient(#5b6396, #5b6396) 8px 18px / 1px 1px no-repeat, #dcdce8;
}
.tbcombo { flex: none; width: 132px; }
.tbspin { flex: none; width: 172px; }
.cb { appearance: none; flex: none; width: 16px; height: 16px; border: 1px solid #a9adc4; background: #fff; display: grid; place-items: center; }
.cb:checked::after { content: ""; width: 10px; height: 10px; background: #51588f; clip-path: polygon(0 45%, 20% 40%, 38% 62%, 85% 0, 100% 5%, 42% 100%); }
.cb.sm { width: 12px; height: 12px; }
.cb.sm:checked::after { width: 8px; height: 8px; }

/* shell */
.shell { flex: 1; min-height: 0; display: grid; grid-template-columns: 24px 257px minmax(0, 1fr) 257px 25px; grid-template-rows: minmax(0, 1fr); }
.column { display: flex; flex-direction: column; min-height: 0; min-width: 0; border-left: 1px solid #a9adc4; }
.strip { border-left: 1px solid #a9adc4; }
.strip.right { border-right: 1px solid #a9adc4; }
.vtab { display: flex; align-items: center; justify-content: center; width: 100%; writing-mode: vertical-rl; text-orientation: sideways; transform: rotate(180deg); line-height: 22px; }
.vtab.on { background: #ccd2fd; }
.left1 { height: 78px; }
.left2 { height: 80px; }
.r1 { height: 118px; }

.dock { display: flex; flex-direction: column; min-height: 0; background: #fff; }
.grow { flex: 1; }
.dockhead { flex: none; height: 29px; display: flex; align-items: center; gap: 4px; padding: 3px 2px 0 5px; background: #e7ebf7; border-bottom: 1px solid #cfd3e2; }
.dockhead h2 { flex: 1; font-size: 11px; line-height: 16px; margin-bottom: 8px; color: #3a3a42; }
.dockhead svg { width: 12px; height: 12px; }
.scrollrow { flex: 1; min-height: 0; display: flex; }
.clip { flex: 1; min-width: 0; overflow: hidden; }
.scroll { flex: none; width: 12px; background: repeating-conic-gradient(#e8e8ea 0 25%, #fff 0 50%) 0 0 / 2px 2px; }
.thumb { display: block; background: #c9cdda; border-radius: 4px; }
.t-detail { height: 108px; }
.t-stage { height: 545px; }
.t-props { height: 220px; }
.t-tools { height: 561px; }

/* trees */
.tree, .tree ul { background: repeating-linear-gradient(#9a9a9a 0 1px, transparent 1px 2px) 10px 0 / 1px calc(100% - 16px) no-repeat; }
.tree ul { margin-left: 20px; }
.node { display: flex; height: 33px; }
.exp { position: relative; flex: none; width: 20px; background: repeating-linear-gradient(90deg, #9a9a9a 0 1px, transparent 1px 2px) 100% 50% / 9px 1px no-repeat; }
.exp::before {
  content: ""; position: absolute; left: 6px; top: calc(50% - 5px); width: 9px; height: 9px; border: 1px solid #8a8a8a;
  background: linear-gradient(#000, #000) center / 5px 1px no-repeat, linear-gradient(#000, #000) center / 1px 5px no-repeat, #fff;
}
.exp.open::before { background: linear-gradient(#000, #000) center / 5px 1px no-repeat, #fff; }
.exp.leaf::before { content: none; }
.node a { flex: 1; display: flex; align-items: center; gap: 7px; padding: 1px 0 0 3px; border-bottom: 1px solid #ededf3; white-space: nowrap; }
.node.sel a { background: #efefef; font-weight: bold; }
.tree.small { flex: none; width: 152px; background-size: 1px 60px; border-right: 2px solid #e6e8fb; }
.small .node { height: 24px; }
.small .exp::before { top: 7px; }

/* detail table */
.detail { flex: none; height: 174px; border-top: 1px solid #a9adc4; }
.detail .dockhead { border-bottom-width: 2px; }
.grid { width: 100%; table-layout: fixed; border-collapse: collapse; }
.c1 { width: 50px; }
.c2 { width: 76px; }
.grid th { position: relative; height: 35px; padding: 0; background: #f3f6fe; font-size: 14px; font-weight: normal; border-right: 1px solid #e2e3ea; border-bottom: 1px solid #e2e3ea; }
.grid td { height: 30px; padding: 0 0 0 3px; border-right: 1px solid #e2e3ea; border-bottom: 1px solid #e2e3ea; white-space: nowrap; overflow: hidden; }
.grid .sort { position: absolute; left: 2px; top: 14px; border: 4px solid transparent; border-top: 0; border-bottom-color: #7a82b4; }
.funnel { position: absolute; right: 4px; top: 7px; height: 17px; }

/* editor */
.center { background: #dce5f4; }
.tabs { flex: none; height: 29px; display: flex; }
.tab { width: 191px; display: flex; align-items: center; padding: 0 4px 0 7px; border-right: 1px solid #a9adc4; }
.tab span { flex: 1; margin-left: 10px; white-space: nowrap; }
.tab button svg { width: 10px; height: 10px; }
.tabfill { flex: 1; border-bottom: 1px solid #a9adc4; }
.editor { flex: 1; min-height: 0; display: flex; padding: 6px 6px 7px 7px; }
.stage { flex: 1; min-width: 0; display: grid; grid-template: 17px minmax(0, 1fr) / 15px minmax(0, 1fr); overflow: hidden; }
.rulerh { grid-column: 2; display: flex; overflow: hidden; border-bottom: 1px solid #000; background: repeating-linear-gradient(90deg, #000 0 1px, transparent 1px 10px) 0 100% / 100% 6px no-repeat; }
.rulerh b, .rulerv b { flex: none; font-weight: normal; font-size: 11px; }
.rulerh b { width: 100px; height: 16px; padding-left: 1px; border-left: 1px solid #000; line-height: 16px; }
.rulerh b.mark { border-color: #f00; }
.rulerv { position: relative; display: flex; flex-direction: column; overflow: hidden; border-right: 1px solid #000; background: repeating-linear-gradient(#000 0 1px, transparent 1px 10px) 100% 0 / 4px 100% no-repeat; }
.rulerv b { height: 100px; padding: 1px 5px 0 0; border-top: 1px solid #000; writing-mode: vertical-rl; line-height: 9px; }
.vmark { position: absolute; left: 0; right: 0; top: 423px; height: 1px; background: #f00; }
.view { min-width: 0; overflow: hidden; }
.screen { position: relative; width: 1025px; height: 600px; border-right: 1px solid #a8acb4; }
.art { width: 1024px; height: 600px; }

/* objects placed on the HMI screen */
.obj { position: absolute; white-space: nowrap; }
.date, .time { font: bold 28px/28px "Liberation Serif", serif; color: #d6d6d6; }
.date { left: 883px; top: 5px; }
.time { left: 902px; top: 39px; }
.reset { left: 957px; top: 70px; font: 40px/44px "Liberation Serif", serif; color: #6a6a69; }
.rst { left: 1003px; top: 70px; font-size: 11px; line-height: 14px; color: #777; }
.caption { left: 362px; top: 189px; font: 27px/32px "Liberation Sans", sans-serif; }
.hmi { font: 16px/20px "Liberation Sans", sans-serif; color: #000; }
.red { left: 270px; top: 269px; width: 128px; height: 50px; background: #f00; border: 1px solid #fff; border-right-color: #777; border-bottom: 2px solid #777; }
.blue { left: 475px; top: 267px; width: 127px; height: 49px; background: #00f; border: 1px solid #fff; border-top-color: #00f; border-right-color: #777; border-bottom-color: #777; box-shadow: inset 0 1px #dde; }

/* property panel */
.props { flex: none; height: 270px; border-top: 1px solid #a9adc4; }
.propbody { padding-left: 6px; }
.propbody h3 { height: 31px; margin-right: 12px; padding: 4px 2px 0 0; font-size: 17px; text-align: right; border-bottom: 1px solid #bdbdbd; }
.groups { display: flex; align-items: flex-start; gap: 6px; }
fieldset { border: 1px solid #bdbdbd; min-width: 0; }
.settings { width: 285px; height: 240px; padding: 12px 0 0 0; display: grid; grid-template-columns: 81px 188px; grid-auto-rows: 27px; gap: 2px; align-items: center; align-content: start; }
.settings legend { margin-left: 7px; padding: 0 2px; }
.settings > label { text-align: right; white-space: nowrap; }
.settings > .check { text-align: left; }
.check { display: flex; align-items: center; gap: 8px; }
.dis { background: #efefef; border-color: #d8d8d8; color: #a9a4a0; }
.dis .arrows { background-color: transparent; filter: grayscale(1); opacity: .5; }
.color { width: 177px; }
.color select { flex: 1; margin: 2px 17px 2px 2px; background: #efefef; border: 1px solid #666; }
.fontrow { display: flex; justify-content: space-between; }
.txt { width: 159px; height: 27px; padding: 0 2px; border: 1px solid #a9adc4; background: #fff; }
.fontrow button { width: 24px; border: 1px solid #a9adc4; background: #f0f5f3; }
.icon select { padding-left: 6px; }
.none { flex: none; align-self: center; width: 16px; height: 16px; border: 1px solid #7b9cc8; outline: 1px solid #bbb; outline-offset: -4px; }
.templates { width: 537px; height: 240px; padding-left: 24px; margin-top: 9px; }
.templates legend { margin-left: -19px; padding: 0 2px; }
.templates legend label { display: flex; align-items: center; gap: 9px; }
.templates .item { display: flex; align-items: center; gap: 6px; margin-top: 5px; }

/* toolbox */
.toolbox { border-left: 1px solid #a9adc4; }
.modes { flex: none; height: 34px; display: flex; gap: 1px; align-items: center; padding-left: 3px; background: #efeff7; }
.modes button { width: 22px; height: 22px; display: flex; align-items: center; justify-content: center; }
.modes .on { background: #ccd2fd; border: 1px solid #6a9ade; }
.acc { flex: none; height: 31px; padding: 0 0 2px 4px; text-align: left; background: #f8f9fd; border-top: 1px solid #e3e5f1; }
.modes + .acc { border-bottom: 1px solid #e3e5f1; }
.widgets li { display: flex; align-items: center; gap: 6px; height: 33px; padding: 1px 0 0 23px; border-bottom: 1px solid #ededf3; }

/* footer */
.foot { flex: none; height: 52px; display: flex; flex-direction: column; overflow: hidden; }
.btabs { display: flex; height: 22px; }
.btabs button { width: 74px; line-height: 22px; }
.btabs .on { background: #ccd2fd; }
.status { display: flex; justify-content: flex-end; gap: 2px; padding-top: 4px; }
.status span { height: 24px; padding-left: 2px; line-height: 22px; white-space: nowrap; overflow: hidden; border: 1px solid #fff; border-top-color: #9a9a9a; border-left-color: #9a9a9a; }
.s1 { width: 105px; }
.s2 { width: 54px; }
.s3 { width: 95px; }
```
